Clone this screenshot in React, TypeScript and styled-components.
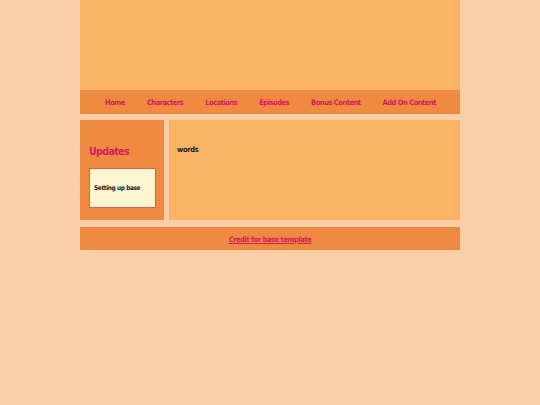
import React from "react";
import styled, { createGlobalStyle } from "styled-components";

const GlobalStyle = createGlobalStyle`
  body {
    margin: 0;
    background: #fbcfa9;
    font-family: "DejaVu Sans Condensed", "DejaVu Sans", sans-serif;
  }
`;

const Container = styled.div`
  width: 380px;
  margin: 0 auto;
  display: flex;
  flex-direction: column;
`;

const Header = styled.header`
  height: 90px;
  background: #fbb366;
`;

const Nav = styled.nav`
  height: 24px;
  background: #ef8a40;
  display: flex;
  align-items: center;
  gap: 22px;
  padding-left: 25px;
  margin-bottom: 6px;
  white-space: nowrap;
`;

const NavLink = styled.a`
  color: #d41c5c;
  font-size: 7.5px;
  font-weight: bold;
  letter-spacing: -0.5px;
  text-decoration: none;
  padding-top: 1px;
`;

const Row = styled.div`
  display: flex;
  gap: 5px;
  height: 100px;
  margin-bottom: 7px;
`;

const Sidebar = styled.aside`
  width: 84px;
  background: #ef8a40;
  padding: 25px 8px 0 9px;
  box-sizing: border-box;
`;

const SideTitle = styled.h2`
  margin: 0 0 11px;
  color: #d41c5c;
  font-size: 10.5px;
  font-weight: bold;
  letter-spacing: -0.6px;
`;

const UpdateBox = styled.div`
  width: 67px;
  height: 40px;
  box-sizing: border-box;
  background: #fdf6d2;
  border: 1px solid #e55b5b;
  display: flex;
  align-items: center;
  padding-left: 4px;
  font-size: 6.5px;
  font-weight: bold;
  letter-spacing: -0.4px;
  color: #222;
`;

const Main = styled.main`
  flex: 1;
  background: #fbb366;
  padding: 25px 8px;
  font-size: 7.5px;
  font-weight: bold;
  letter-spacing: -0.35px;
  color: #222;
`;

const Footer = styled.footer`
  height: 23px;
  background: #ef8a40;
  display: flex;
  align-items: center;
  justify-content: center;
  padding-top: 1px;
  box-sizing: border-box;
`;

const FooterLink = styled.a`
  color: #d41c5c;
  font-size: 7.5px;
  font-weight: bold;
  letter-spacing: -0.45px;
  text-decoration: underline;
`;

const links = ["Home", "Characters", "Locations", "Episodes", "Bonus Content", "Add On Content"];

const App = () => {
  return (
    <>
      <GlobalStyle />
      <Container>
        <Header />
        <Nav>
          {links.map((l) => (
            <NavLink key={l} href="#">
              {l}
            </NavLink>
          ))}
        </Nav>
        <Row>
          <Sidebar>
            <SideTitle>Updates</SideTitle>
            <UpdateBox>Setting up base</UpdateBox>
          </Sidebar>
          <Main>words</Main>
        </Row>
        <Footer>
          <FooterLink href="#">Credit for base template</FooterLink>
        </Footer>
      </Container>
    </>
  );
};

export default App;
